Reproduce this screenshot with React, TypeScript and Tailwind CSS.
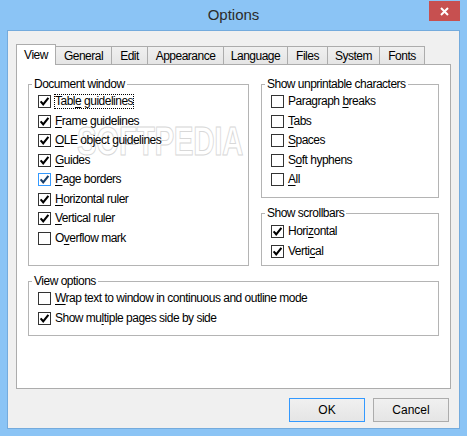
import React from "react";

// "&" marks the mnemonic letter, as in the Win32 resource strings
function Mnemonic({ text }: { text: string }) {
  const i = text.indexOf("&");
  if (i < 0) return <>{text}</>;
  return (
    <>
      {text.slice(0, i)}
      <span className="underline underline-offset-[2px] decoration-1">{text[i + 1]}</span>
      {text.slice(i + 2)}
    </>
  );
}

function CheckRow({
  label,
  checked,
  focused = false,
  hot = false,
}: {
  label: string;
  checked: boolean;
  focused?: boolean;
  hot?: boolean;
}) {
  return (
    <div className="flex items-center h-[19.5px]">
      <span
        className={`w-[13px] h-[13px] border bg-white flex items-center justify-center shrink-0 ${
          hot ? "border-[#3399ff] bg-[#eaf5fd]" : "border-[#333333]"
        }`}
      >
        {checked && (
          <svg width="11" height="11" viewBox="0 0 11 11">
            <path
              d="M1.6 5.4 L4.2 8.3 L9.4 1.9"
              fill="none"
              stroke={hot ? "#1b3e66" : "#000"}
              strokeWidth="2.1"
            />
          </svg>
        )}
      </span>
      <span
        className={`ml-[3px] border leading-[13px] whitespace-nowrap ${
          focused ? "border-dotted border-black" : "border-transparent"
        }`}
      >
        <Mnemonic text={label} />
      </span>
    </div>
  );
}

function Group({
  title,
  className,
  children,
}: {
  title: string;
  className: string;
  children: React.ReactNode;
}) {
  return (
    <fieldset className={`border border-[#b4b4b4] ${className}`}>
      <legend className="ml-[3px] px-[2px] leading-[15px]">{title}</legend>
      <div className="pl-[9px]">{children}</div>
    </fieldset>
  );
}

const TABS = [
  { name: "View", w: "w-[40px]" },
  { name: "General", w: "w-[57px]" },
  { name: "Edit", w: "w-[37px]" },
  { name: "Appearance", w: "w-[77px]" },
  { name: "Language", w: "w-[65px]" },
  { name: "Files", w: "w-[41px]" },
  { name: "System", w: "w-[53px]" },
  { name: "Fonts", w: "w-[46px]" },
];

export default function App() {
  return (
    <div className="w-[467px] h-[436px] bg-[#8bc4f5] flex flex-col font-['Liberation_Sans',Arial,sans-serif] text-[12px] text-black tracking-[-0.5px] select-none">
      {/* Title bar */}
      <div className="h-[30px] grid grid-cols-[1fr_auto_1fr] items-start">
        <div />
        <div className="h-[30px] flex items-center text-[15px] text-[#2b2b2b] tracking-normal">Options</div>
        <div className="flex justify-end pr-[7px] pt-[1px]">
          <div className="w-[31px] h-[20px] bg-[#c75050] flex items-center justify-center">
            <svg width="9" height="9" viewBox="0 0 9 9">
              <path d="M1 1 L8 8 M8 1 L1 8" stroke="#fff" strokeWidth="2" />
            </svg>
          </div>
        </div>
      </div>

      {/* Client area */}
      <div className="mx-[7px] h-[399px] border border-[#74abdd] bg-[#f0f0f0] px-[8px] pt-[13px]">
        {/* Tabs */}
        <div className="flex items-end h-[20px]">
          {TABS.map((t, i) =>
            i === 0 ? (
              <div
                key={t.name}
                className={`${t.w} h-[21px] -mb-px relative z-10 bg-white border border-b-0 border-[#acacac] flex items-center justify-center`}
              >
                {t.name}
              </div>
            ) : (
              <div
                key={t.name}
                className={`${t.w} h-[18px] -ml-px border border-b-0 border-[#acacac] bg-gradient-to-b from-[#f0f0f0] to-[#e5e5e5] flex items-center justify-center`}
              >
                {t.name}
              </div>
            )
          )}
        </div>

        {/* Tab page */}
        <div className="relative h-[325px] bg-white border border-[#acacac] px-[11px] pt-[12px]">
          {/* watermark stamped on the screenshot */}
          <div className="absolute left-[60px] top-[56px] pointer-events-none" aria-hidden="true">
            <span className="block text-[40px] font-bold leading-none text-transparent [-webkit-text-stroke:1px_#d8d8d8] scale-x-[0.74] origin-left whitespace-nowrap">
              SOFTPEDIA
            </span>
          </div>

          <div className="relative grid grid-cols-[221px_178px] gap-x-[12px]">
            <Group title="Document window" className="h-[189px]">
              <CheckRow label="Tabl&e guidelines" checked focused />
              <CheckRow label="&Frame guidelines" checked />
              <CheckRow label="&OLE object guidelines" checked />
              <CheckRow label="&Guides" checked />
              <CheckRow label="&Page borders" checked hot />
              <CheckRow label="&Horizontal ruler" checked />
              <CheckRow label="&Vertical ruler" checked />
              <CheckRow label="O&verflow mark" checked={false} />
            </Group>

            <div className="flex flex-col gap-[8px]">
              <Group title="Show unprintable characters" className="h-[121px]">
                <CheckRow label="Paragraph &breaks" checked={false} />
                <CheckRow label="&Tabs" checked={false} />
                <CheckRow label="&Spaces" checked={false} />
                <CheckRow label="S&oft hyphens" checked={false} />
                <CheckRow label="&All" checked={false} />
              </Group>
              <Group title="Show scrollbars" className="h-[60px]">
                <div className="mt-[1px]">
                  <CheckRow label="Hori&zontal" checked />
                  <CheckRow label="Verti&cal" checked />
                </div>
              </Group>
            </div>
          </div>

          <Group title="View options" className="relative mt-[8px] h-[62px] w-[411px]">
            <CheckRow label="&Wrap text to window in continuous and outline mode" checked={false} />
            <CheckRow label="Show mu&ltiple pages side by side" checked />
          </Group>
        </div>

        {/* Buttons */}
        <div className="flex justify-end gap-[8px] mt-[9px] pr-[2px]">
          <button className="w-[76px] h-[24px] border border-[#3399ff] bg-gradient-to-b from-[#f0f0f0] to-[#e5e5e5] tracking-normal">
            OK
          </button>
          <button className="w-[76px] h-[24px] border border-[#acacac] bg-gradient-to-b from-[#f0f0f0] to-[#e5e5e5] tracking-normal">
            Cancel
          </button>
        </div>
      </div>
    </div>
  );
}
